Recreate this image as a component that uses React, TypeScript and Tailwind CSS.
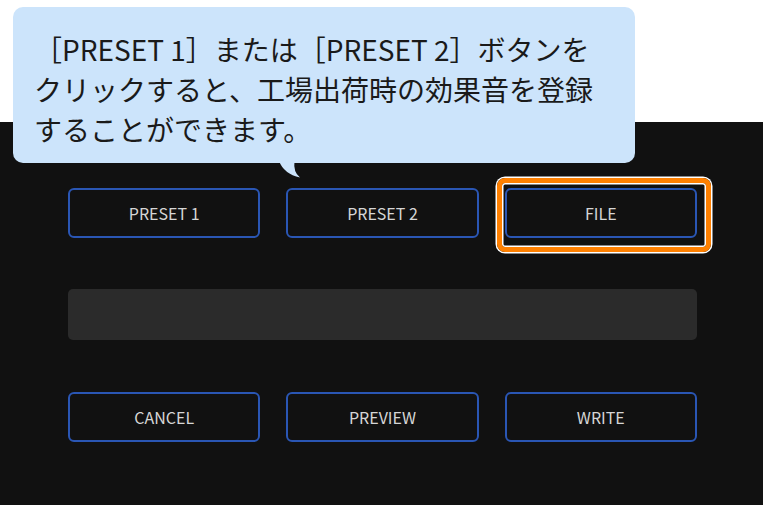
import React from "react";

const font = { fontFamily: '"Noto Sans CJK JP", "Noto Sans", sans-serif' };

function Btn({ label, highlight }: { label: string; highlight?: boolean }) {
  return (
    <div className="relative">
      <div className="flex h-[50px] items-center justify-center rounded-[6px] border-2 border-[#2a56b4] text-[16px] text-[#d6d6d6]">
        {label}
      </div>
      {highlight && (
        <div className="pointer-events-none absolute -left-[8px] -top-[10px] h-[74px] w-[214px] rounded-[8px] border-[5px] border-[#ff8000] shadow-[0_0_0_1.5px_#ffffff,inset_0_0_0_1.5px_#ffffff]" />
      )}
    </div>
  );
}

export default function App() {
  return (
    <div className="relative h-[508px] w-[766px] overflow-hidden bg-white" style={font}>
      <div className="mt-[122px] h-[383px] w-[763px] bg-[#111111] pl-[68px] pt-[66px]">
        <div className="grid w-[629px] grid-cols-3 gap-x-[26px]">
          <Btn label="PRESET 1" />
          <Btn label="PRESET 2" />
          <Btn label="FILE" highlight />
        </div>
        <div className="mt-[51px] h-[51px] w-[629px] rounded-[5px] bg-[#2b2b2b]" />
        <div className="mt-[52px] grid w-[629px] grid-cols-3 gap-x-[26px]">
          <Btn label="CANCEL" />
          <Btn label="PREVIEW" />
          <Btn label="WRITE" />
        </div>
      </div>

      <div className="absolute left-[13px] top-[7px] h-[156px] w-[622px] rounded-[10px] bg-[#cce4fb] pl-[21px] pt-[22px] text-[28px] leading-[40px] whitespace-nowrap text-[#1a1a1a]">
        ［PRESET 1］または［PRESET 2］ボタンを
        <br />
        クリックすると、工場出荷時の効果音を登録
        <br />
        することができます。
      </div>
      <svg className="absolute left-[278px] top-[160px]" width="26" height="20" viewBox="0 0 26 20">
        <path d="M1 1 Q 6 14 22 17.5 Q 15 12 16.5 1 Z" fill="#cce4fb" />
      </svg>
    </div>
  );
}
